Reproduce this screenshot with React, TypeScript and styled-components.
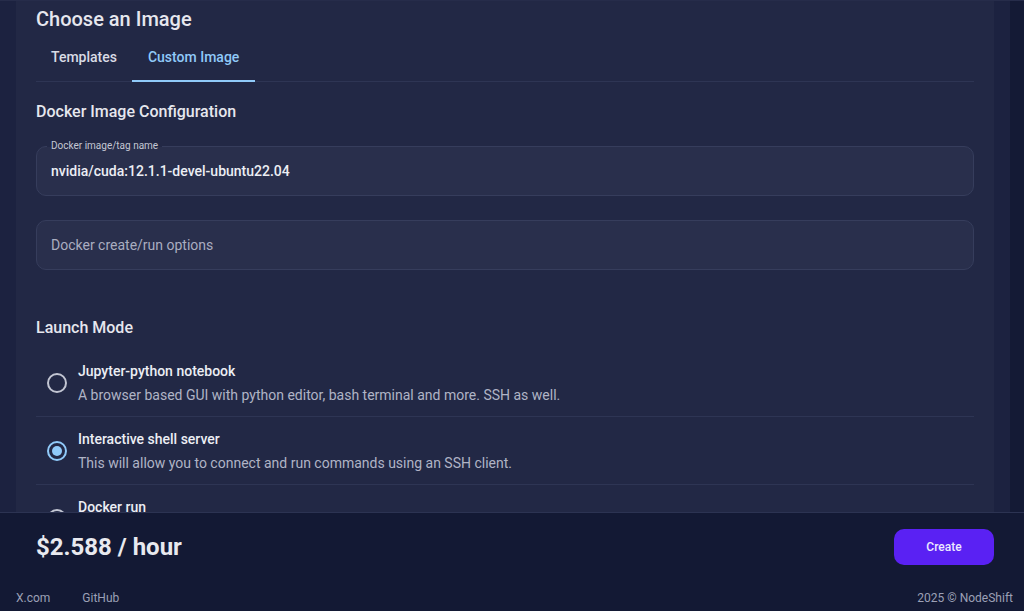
import * as React from 'react'
import styled, { createGlobalStyle } from 'styled-components'

const GlobalStyle = createGlobalStyle`
  html, body {
    margin: 0;
    padding: 0;
    background: #141a35;
    font-family: Roboto, "Liberation Sans", sans-serif;
    color: #e8e9ef;
  }
  * { box-sizing: border-box; }
`

const Page = styled.div`
  width: 1024px;
  height: 611px;
  display: flex;
  flex-direction: column;
  overflow: hidden;
  background: #141a35;
`

const ScrollArea = styled.div`
  flex: 1;
  min-height: 0;
  display: flex;
  border-top: 1px solid #262c4a;
  overflow: hidden;
`

const Surface = styled.div`
  flex: 1;
  display: flex;
  padding: 0 16px;
  background: #1c2240;
`

const ScrollTrack = styled.div`
  width: 14px;
  background: #141a35;
`

const Panel = styled.div`
  flex: 1;
  background: #222845;
  padding: 6px 20px 0;
  display: flex;
  flex-direction: column;

  & > * {
    flex-shrink: 0;
  }
`

const Title = styled.h2`
  margin: 0;
  font-size: 20px;
  line-height: 24px;
  font-weight: 500;
  color: #e6e7ee;
`

const TabBar = styled.div`
  display: flex;
  margin-top: 2px;
  border-bottom: 1px solid #2e3554;
`

const Tab = styled.div<{ $active?: boolean }>`
  position: relative;
  height: 48px;
  padding: 0 16px;
  display: flex;
  align-items: center;
  font-size: 14px;
  font-weight: 500;
  color: ${({ $active }) => ($active ? '#90caf9' : '#d9dbe4')};

  &:first-child {
    padding: 0 15px;
  }

  &::after {
    content: '';
    display: ${({ $active }) => ($active ? 'block' : 'none')};
    position: absolute;
    left: 0;
    right: 0;
    bottom: -1px;
    height: 2px;
    background: #90caf9;
  }
`

const SectionHeading = styled.h3<{ $top: number }>`
  margin: ${({ $top }) => $top}px 0 0;
  font-size: 16px;
  line-height: 24px;
  font-weight: 500;
  color: #e6e7ee;
`

const Field = styled.div<{ $top: number }>`
  position: relative;
  margin-top: ${({ $top }) => $top}px;
  height: 50px;
  border: 1px solid #363d5c;
  border-radius: 10px;
  background: #292f4c;
  padding: 0 14px;
  display: flex;
  align-items: center;
  font-size: 14px;
`

const FieldLabel = styled.span`
  position: absolute;
  top: -7px;
  left: 10px;
  padding: 0 4px;
  font-size: 10px;
  line-height: 12px;
  color: #c4c7d4;
  background: linear-gradient(#222845 0 7px, #292f4c 7px 100%);
`

const FieldValue = styled.span<{ $placeholder?: boolean }>`
  font-weight: ${({ $placeholder }) => ($placeholder ? 400 : 500)};
  color: ${({ $placeholder }) => ($placeholder ? '#a9adc0' : '#eceef4')};
`

const OptionList = styled.div`
  margin-top: 9px;
  display: flex;
  flex-direction: column;
`

const Option = styled.div`
  display: flex;
  align-items: center;
  padding: 12px 0 11px;
  border-bottom: 1px solid #2e3554;
`

const RadioDot = styled.span<{ $checked?: boolean }>`
  flex: none;
  width: 20px;
  height: 20px;
  margin: 0 11px;
  border-radius: 50%;
  border: 2px solid ${({ $checked }) => ($checked ? '#90caf9' : '#c2c5d2')};
  display: flex;
  align-items: center;
  justify-content: center;

  &::after {
    content: '';
    display: ${({ $checked }) => ($checked ? 'block' : 'none')};
    width: 10px;
    height: 10px;
    border-radius: 50%;
    background: #90caf9;
  }
`

const OptionText = styled.div`
  min-height: 44px;
  display: flex;
  flex-direction: column;
  gap: 4px;
`

const OptionTitle = styled.span`
  font-size: 14px;
  line-height: 20px;
  font-weight: 500;
  color: #eceef4;
`

const OptionDesc = styled.span`
  font-size: 14px;
  line-height: 20px;
  color: #b0b4c6;
`

const BottomBar = styled.div`
  flex: none;
  height: 99px;
  background: #131934;
  border-top: 1px solid #2c3352;
  display: flex;
  flex-direction: column;
`

const PriceRow = styled.div`
  display: flex;
  align-items: center;
  justify-content: space-between;
  padding: 16px 30px 0 36px;
`

const Price = styled.span`
  font-size: 24px;
  line-height: 36px;
  font-weight: 700;
  color: #e8e9ef;
`

const CreateButton = styled.button`
  width: 100px;
  height: 36px;
  border: none;
  border-radius: 10px;
  background: #5a21f3;
  color: #eceaff;
  font-family: inherit;
  font-size: 12px;
  font-weight: 500;
  cursor: pointer;
`

const Footer = styled.div`
  margin-top: 23px;
  display: flex;
  align-items: center;
  padding: 0 11px 0 16px;
  font-size: 12px;
  line-height: 20px;
  color: #9ca0b6;
`

const FooterLink = styled.a`
  color: inherit;
  text-decoration: none;
  margin-right: 32px;
`

const Copyright = styled.span`
  margin-left: auto;
`

const modes: { title: string; desc?: string; checked?: boolean }[] = [
  {
    title: 'Jupyter-python notebook',
    desc: 'A browser based GUI with python editor, bash terminal and more. SSH as well.',
  },
  {
    title: 'Interactive shell server',
    desc: 'This will allow you to connect and run commands using an SSH client.',
    checked: true,
  },
  {
    title: 'Docker run',
  },
]

const App = () => {
  return (
    <Page>
      <GlobalStyle />
      <ScrollArea>
        <Surface>
          <Panel>
            <Title>Choose an Image</Title>
            <TabBar>
              <Tab>Templates</Tab>
              <Tab $active>Custom Image</Tab>
            </TabBar>

            <SectionHeading $top={18}>Docker Image Configuration</SectionHeading>
            <Field $top={22}>
              <FieldLabel>Docker image/tag name</FieldLabel>
              <FieldValue>nvidia/cuda:12.1.1-devel-ubuntu22.04</FieldValue>
            </Field>
            <Field $top={24}>
              <FieldValue $placeholder>Docker create/run options</FieldValue>
            </Field>

            <SectionHeading $top={46}>Launch Mode</SectionHeading>
            <OptionList>
              {modes.map((m) => (
                <Option key={m.title}>
                  <RadioDot $checked={m.checked} />
                  <OptionText>
                    <OptionTitle>{m.title}</OptionTitle>
                    {m.desc && <OptionDesc>{m.desc}</OptionDesc>}
                  </OptionText>
                </Option>
              ))}
            </OptionList>
          </Panel>
        </Surface>
        <ScrollTrack />
      </ScrollArea>

      <BottomBar>
        <PriceRow>
          <Price>$2.588 / hour</Price>
          <CreateButton>Create</CreateButton>
        </PriceRow>
        <Footer>
          <FooterLink href="#">X.com</FooterLink>
          <FooterLink href="#">GitHub</FooterLink>
          <Copyright>2025 © NodeShift</Copyright>
        </Footer>
      </BottomBar>
    </Page>
  )
}

export default App
